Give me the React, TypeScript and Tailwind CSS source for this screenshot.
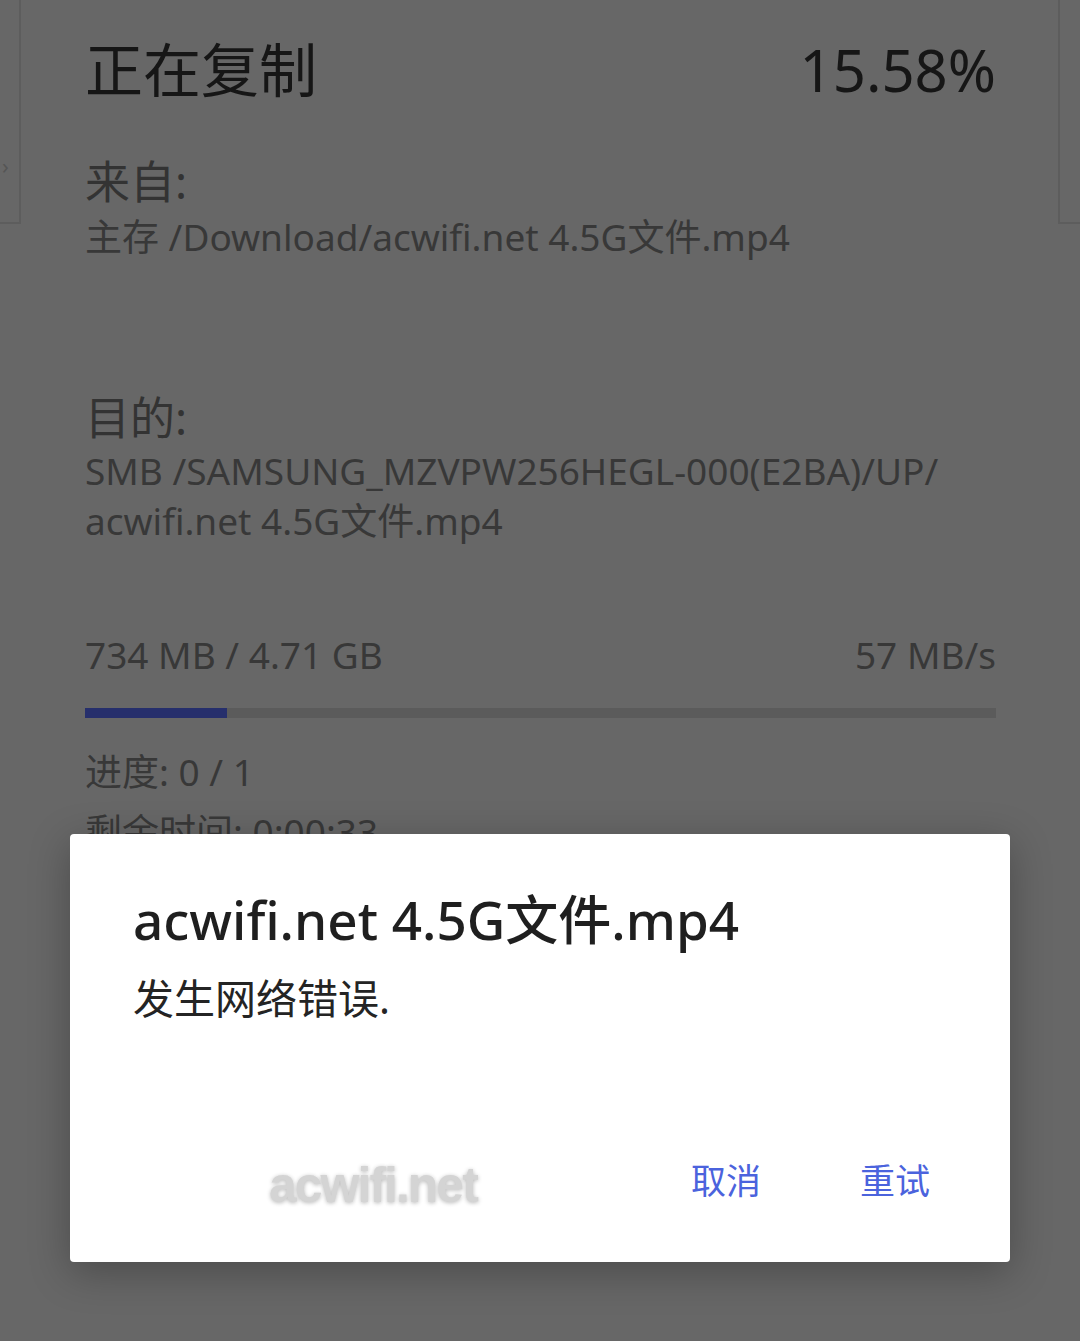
import React from "react";

const font = { fontFamily: '"Noto Sans", "Noto Sans CJK SC", sans-serif' };

export default function App() {
  return (
    <div
      className="relative w-[1080px] h-[1341px] overflow-hidden bg-[#676767]"
      style={font}
    >
      <div className="flex h-full">
        {/* left edge strip */}
        <div className="w-[21px] shrink-0 flex flex-col">
          <div className="h-[224px] border-r-2 border-b-2 border-[#5d5d5d] flex items-start">
            <span className="text-[#555555] text-[22px] leading-none ml-[2px] mt-[154px]">›</span>
          </div>
        </div>

        {/* main copy panel */}
        <div className="flex-1 pl-[64px] pr-[62px] pt-[30px]">
          <div className="flex justify-between items-center text-[#161616] text-[58px] leading-[80px]">
            <span>正在复制</span>
            <span>15.58%</span>
          </div>

          <div className="mt-[44px] text-[#333333] text-[45px] leading-[56px]">来自:</div>
          <div className="mt-[2px] text-[#383838] text-[37px] leading-[50px]">
            主存 /Download/acwifi.net 4.5G文件.mp4
          </div>

          <div className="mt-[128px] text-[#333333] text-[45px] leading-[56px]">目的:</div>
          <div className="text-[#383838] text-[37px] leading-[50px]">
            SMB /SAMSUNG_MZVPW256HEGL-000(E2BA)/UP/
            <br />
            acwifi.net 4.5G文件.mp4
          </div>

          <div className="mt-[84px] flex justify-between text-[#383838] text-[37px] leading-[50px]">
            <span>734 MB / 4.71 GB</span>
            <span>57 MB/s</span>
          </div>

          <div className="mt-[28px] h-[10px] bg-[#5b5b5b] flex">
            <div className="h-full bg-[#262f6c]" style={{ width: "15.58%" }} />
          </div>

          <div className="mt-[24px] text-[#383838] text-[37px] leading-[60px]">进度: 0 / 1</div>
          <div className="text-[#383838] text-[37px] leading-[60px]">剩余时间: 0:00:33</div>
        </div>

        {/* right edge strip */}
        <div className="w-[22px] shrink-0 flex flex-col">
          <div className="h-[224px] border-l-2 border-b-2 border-[#5d5d5d]" />
        </div>
      </div>

      {/* error dialog */}
      <div className="absolute left-[70px] top-[834px] w-[940px] h-[428px] bg-white rounded-[4px] shadow-[0_10px_40px_rgba(0,0,0,0.28)] flex flex-col pl-[63px] pr-[80px] pt-[50px]">
        <div className="text-[#1f1f1f] text-[53px] leading-[72px] font-medium">
          acwifi.net 4.5G文件.mp4
        </div>
        <div className="mt-[14px] text-[#242424] text-[41px] leading-[56px]">发生网络错误.</div>

        <div className="mt-auto mb-[48px] flex items-center">
          <span
            className="ml-[136px] text-[#d4d4d4] text-[50px] leading-[56px] font-bold tracking-[-2px] blur-[0.6px]"
            style={{ textShadow: "0 1px 4px rgba(0,0,0,0.28)", fontFamily: '"Liberation Sans", sans-serif' }}
          >
            acwifi.net
          </span>
          <div className="ml-auto flex gap-[99px] text-[#4b63dd] text-[35px] leading-[50px] mb-[8px]">
            <span>取消</span>
            <span>重试</span>
          </div>
        </div>
      </div>
    </div>
  );
}
